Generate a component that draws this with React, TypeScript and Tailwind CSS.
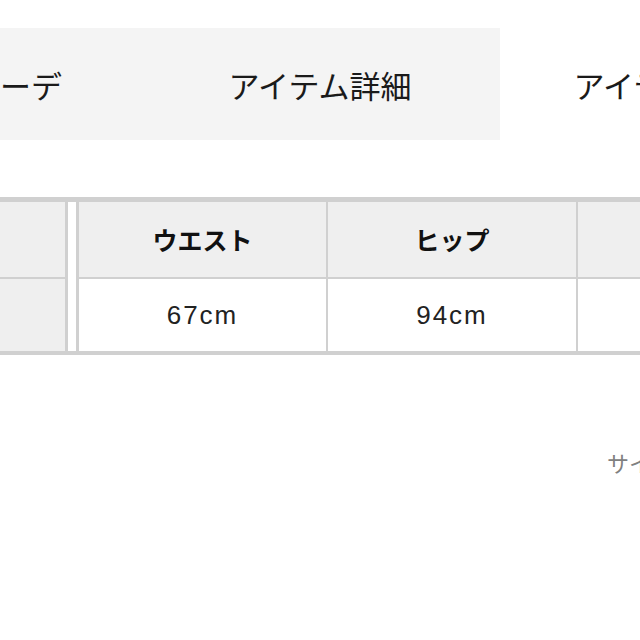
import { FC } from "react";

// Tabs across the top

const tabs = [
  { label: "おすすめコーデ", active: false, width: "w-[373px]" },
  { label: "アイテム詳細", active: false, width: "w-[360px]" },
  { label: "アイテムサイズ", active: true, width: "w-[360px]" },
];

const TabBar: FC = () => (
  <div className="mt-[28px] -ml-[233px] flex h-[112px] w-[1100px]">
    {tabs.map((tab) => (
      <div
        key={tab.label}
        className={`flex shrink-0 items-center justify-center ${tab.width} ${
          tab.active ? "bg-white" : "bg-[#f4f4f4]"
        }`}
      >
        <span className="text-[31px] leading-none whitespace-nowrap text-[#1a1a1a]">
          {tab.label}
        </span>
      </div>
    ))}
  </div>
);

// Size table

const columns = [
  { head: "ウエスト", value: "67cm", border: "border-l-[3px]" },
  { head: "ヒップ", value: "94cm", border: "border-l-2" },
  { head: "股上", value: "29cm", border: "border-l-2" },
];

const SizeTable: FC = () => (
  <div className="mt-[57px] flex w-[900px] border-t-[5px] border-b-4 border-[#d0d0d0]">
    {/* Row headings */}
    <div className="flex w-[68px] flex-col border-r-[3px] border-[#d0d0d0]">
      <div className="h-[75px] bg-[#efefef]" />
      <div className="h-[2px] bg-[#d0d0d0]" />
      <div className="h-[72px] bg-[#efefef]" />
    </div>

    {/* Gap */}
    <div className="w-[8px] bg-white" />

    {columns.map((col) => (
      <div
        key={col.head}
        className={`flex w-[250px] shrink-0 flex-col border-[#d0d0d0] ${col.border}`}
      >
        <div className="flex h-[75px] items-center justify-center bg-[#efefef] text-[25px] font-bold text-[#111]">
          {col.head}
        </div>
        <div className="h-[2px] bg-[#d0d0d0]" />
        <div className="flex h-[72px] items-center justify-center bg-white font-['Liberation_Sans',sans-serif] text-[26px] tracking-[2px] text-[#222]">
          {col.value}
        </div>
      </div>
    ))}
  </div>
);

export default function App() {
  return (
    <div
      className="h-[640px] w-[640px] overflow-hidden bg-white"
      style={{ fontFamily: '"Noto Sans CJK JP", "Noto Sans", sans-serif' }}
    >
      <TabBar />
      <SizeTable />

      {/* Note below the table */}
      <div className="mt-[96px] pl-[607px] text-[22px] leading-none whitespace-nowrap text-[#808080]">
        サイズ表記について
      </div>
    </div>
  );
}
